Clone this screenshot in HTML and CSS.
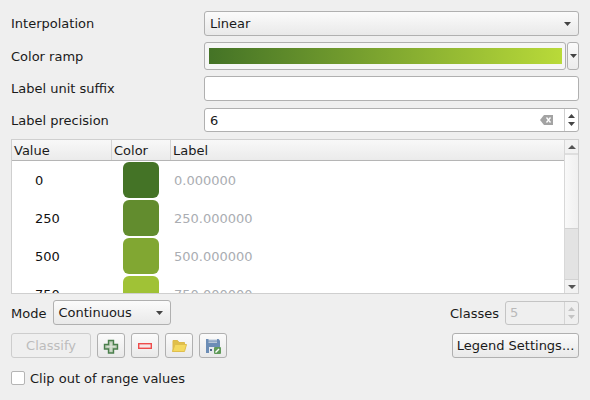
FILE: index.html
```html
<!DOCTYPE html>
<html lang="en">
<head>
<meta charset="utf-8">
<title>Color ramp settings</title>
<link rel="stylesheet" href="styles.css">
</head>
<body>
<div class="panel">
  <div class="form">
    <div class="row r-interp">
      <label class="lbl">Interpolation</label>
      <div class="field combo">Linear<svg class="arrow" width="7" height="4" viewBox="0 0 7 4"><path d="M0 0h7L3.500 4z"/></svg></div>
    </div>
    <div class="row r-ramp">
      <label class="lbl">Color ramp</label>
      <div class="field ramp-wrap">
        <div class="ramp-main"><div class="ramp"></div></div>
        <div class="ramp-btn"><svg class="arrow" width="7" height="4" viewBox="0 0 7 4"><path d="M0 0h7L3.500 4z"/></svg></div>
      </div>
    </div>
    <div class="row r-suffix">
      <label class="lbl">Label unit suffix</label>
      <div class="field input"></div>
    </div>
    <div class="row r-prec">
      <label class="lbl">Label precision</label>
      <div class="field input spin">
        <span class="spin-text">6</span>
        <svg class="clear" width="13" height="10" viewBox="0 0 13 10"><path d="M4 0h9v10H4L0 5z" fill="#a3a3a3"/><path d="M6.500 2.500l4 5M10.500 2.500l-4 5" stroke="#fff" stroke-width="1.300" fill="none"/></svg>
        <div class="spin-btns">
          <svg width="7" height="4" viewBox="0 0 7 4"><path d="M0 4h7L3.500 0z" fill="#444"/></svg>
          <svg width="7" height="4" viewBox="0 0 7 4"><path d="M0 0h7L3.500 4z" fill="#444"/></svg>
        </div>
      </div>
    </div>
  </div>

  <div class="table">
    <div class="table-main">
      <div class="thead">
        <div class="th c-val">Value</div>
        <div class="th c-col">Color</div>
        <div class="th c-lab">Label</div>
      </div>
      <div class="tbody">
        <div class="tr"><div class="td-val">0</div><div class="td-col"><div class="swatch s0"></div></div><div class="td-lab">0.000000</div></div>
        <div class="tr"><div class="td-val">250</div><div class="td-col"><div class="swatch s1"></div></div><div class="td-lab">250.000000</div></div>
        <div class="tr"><div class="td-val">500</div><div class="td-col"><div class="swatch s2"></div></div><div class="td-lab">500.000000</div></div>
        <div class="tr"><div class="td-val">750</div><div class="td-col"><div class="swatch s3"></div></div><div class="td-lab">750.000000</div></div>
      </div>
    </div>
    <div class="scroll">
      <div class="sb-btn sb-up"><svg width="8" height="4" viewBox="0 0 8 4"><path d="M0 4h8L4 0z" fill="#555"/></svg></div>
      <div class="sb-handle"></div>
      <div class="sb-track"></div>
      <div class="sb-btn sb-down"><svg width="8" height="4" viewBox="0 0 8 4"><path d="M0 0h8L4 4z" fill="#555"/></svg></div>
    </div>
  </div>

  <div class="mode-row">
    <label class="lbl-inline">Mode</label>
    <div class="mode-combo">Continuous<svg class="arrow" width="7" height="4" viewBox="0 0 7 4"><path d="M0 0h7L3.500 4z"/></svg></div>
    <div class="spacer"></div>
    <label class="lbl-classes">Classes</label>
    <div class="classes">
      <span class="classes-text">5</span>
      <div class="classes-btns">
        <svg width="7" height="4" viewBox="0 0 7 4"><path d="M0 4h7L3.500 0z" fill="#c4c4c4"/></svg>
        <svg width="7" height="4" viewBox="0 0 7 4"><path d="M0 0h7L3.500 4z" fill="#c4c4c4"/></svg>
      </div>
    </div>
  </div>

  <div class="btn-row">
    <button class="btn classify" disabled>Classify</button>
    <button class="btn icon-btn" aria-label="Add">
      <svg width="16" height="16" viewBox="0 0 16 16"><path d="M5.500 2.500h5v4h4v4.500h-4v4h-5v-4h-4v-4.500h4z" fill="#b9c9b4" stroke="#4a7f4c" stroke-width="1.400"/><path d="M8 4.500v9M3.500 8.750h9" stroke="#dfe7dc" stroke-width="1.200"/></svg>
    </button>
    <button class="btn icon-btn" aria-label="Remove">
      <svg width="16" height="16" viewBox="0 0 16 16"><rect x="1.700" y="5.700" width="12.600" height="4.600" fill="#f6e6e6" stroke="#ee4c4c" stroke-width="1.400"/></svg>
    </button>
    <button class="btn icon-btn" aria-label="Open">
      <svg width="16" height="16" viewBox="0 0 16 16"><path d="M2 14V2.500h4.500L8 4.500h5.500V6.500" fill="#e0bf4a" stroke="#dcb94a"/><path d="M1.500 13.500L4 6.500h11.500l-2 7z" fill="#f4d95f" stroke="#dfbe4d"/></svg>
    </button>
    <button class="btn icon-btn" aria-label="Save">
      <svg width="16" height="16" viewBox="0 0 16 16"><path d="M1 1h12.500L15 2.500V15H1z" fill="#6c8db6"/><rect x="3.500" y="1" width="8.500" height="1.500" fill="#d9e0e8"/><rect x="3.500" y="3.500" width="8.500" height="1.500" fill="#b9c7d8"/><rect x="4" y="9" width="7" height="6" fill="#e7eaee"/><rect x="5" y="11" width="2" height="2" fill="#50688a"/><rect x="9" y="9" width="7" height="7" rx="1" fill="#5f9a58"/><path d="M10.500 14.500l3.500-3.500" stroke="#fff" stroke-width="1.400"/></svg>
    </button>
    <div class="spacer"></div>
    <button class="btn legend">Legend Settings...</button>
  </div>

  <label class="check-row"><span class="check"></span>Clip out of range values</label>
</div>
</body>
</html>
```
FILE: styles.css
```css
* { box-sizing: border-box; }
html, body { margin: 0; height: 100%; }
body {
  background: #efefef;
  font-family: "DejaVu Sans", sans-serif;
  font-size: 13px;
  color: #1a1a1a;
  overflow: hidden;
}
.panel { width: 590px; height: 400px; padding: 11px 11px 0; display: flex; flex-direction: column; }

.form { display: flex; flex-direction: column; }
.row { display: flex; align-items: center; }
.r-interp { height: 25px; }
.r-ramp { height: 28px; margin-top: 6px; }
.r-suffix { height: 25px; margin-top: 6px; }
.r-prec { height: 24px; margin-top: 7px; }
.lbl { width: 193px; flex: none; }
.field { flex: 1; height: 100%; border-radius: 3px; }

.combo {
  display: flex; align-items: center; justify-content: space-between;
  padding: 0 7px 0 5px;
  border: 1px solid #b0b0b0;
  background: linear-gradient(#fbfbfb, #e9e9e9);
}
.arrow { fill: #444; flex: none; }

.ramp-wrap { display: flex; gap: 1px; }
.ramp-main {
  flex: 1; padding: 5px 3px 5px 4px;
  background: #f6f6f6; border: 1px solid #b0b0b0; border-radius: 3px;
}
.ramp { height: 100%; background: linear-gradient(90deg, #447326, #b9da39); }
.ramp-btn {
  width: 12px; flex: none; display: flex; align-items: center; justify-content: center;
  border: 1px solid #b0b0b0; border-radius: 3px; background: linear-gradient(#fbfbfb, #ececec);
}

.input { background: #fff; border: 1px solid #b0b0b0; }
.spin { display: flex; align-items: center; padding-left: 5px; }
.spin-text { flex: 1; }
.clear { flex: none; margin-right: 11px; }
.spin-btns {
  width: 14px; height: 100%; flex: none;
  border-left: 1px solid #cfcfcf;
  display: flex; flex-direction: column; align-items: center; justify-content: center; gap: 4px;
}
.spin-btns svg, .classes-btns svg { display: block; }

.table {
  margin-top: 7px; height: 155px; flex: none;
  display: flex;
  background: #fff; border: 1px solid #cfcfcf;
}
.table-main { flex: 1; min-width: 0; display: flex; flex-direction: column; overflow: hidden; }
.thead {
  height: 21px; flex: none; display: flex;
  background: linear-gradient(#f8f8f8, #ebebeb);
  border-bottom: 1px solid #b5b5b5;
}
.th { height: 100%; padding: 0 2px; display: flex; align-items: center; border-right: 1px solid #d4d4d4; }
.c-val { width: 100px; }
.c-col { width: 59px; }
.c-lab { flex: 1; border-right: 0; padding-left: 2px; }
.tbody { flex: 1; overflow: hidden; }
.tr { height: 38px; display: flex; align-items: center; color: #111; }
.td-val { width: 100px; padding-left: 23px; }
.td-col { width: 59px; padding-left: 11px; }
.swatch { width: 36px; height: 36px; border-radius: 6px; }
.s0 { background: #447326; }
.s1 { background: #628c2e; }
.s2 { background: #81a732; }
.s3 { background: #a0c236; }
.td-lab { padding-left: 3px; color: #aaadb2; }

.scroll { width: 14px; flex: none; display: flex; flex-direction: column; border-left: 1px solid #d8d8d8; }
.sb-btn { height: 13px; flex: none; display: flex; align-items: center; justify-content: center; background: #f2f2f2; }
.sb-handle { height: 76px; flex: none; background: linear-gradient(90deg, #f9f9f9, #f0f0f0); border-top: 2px solid #dedede; border-bottom: 1px solid #d2d2d2; }
.sb-track { flex: 1; background: #e3e3e3; border-bottom: 1px solid #d2d2d2; }

.mode-row { display: flex; align-items: center; height: 25px; margin-top: 6px; }
.lbl-inline { margin-right: 7px; padding-top: 2px; }
.mode-combo {
  width: 118px; height: 25px; display: flex; align-items: center; justify-content: space-between;
  padding: 0 7px 0 4px;
  border: 1px solid #b0b0b0; border-radius: 3px;
  background: linear-gradient(#fbfbfb, #e9e9e9);
}
.spacer { flex: 1; }
.lbl-classes { margin-right: 6px; padding-top: 2px; }
.classes {
  width: 74px; height: 24px; display: flex; align-items: center;
  padding-left: 4px; color: #b9b9b9;
  border: 1px solid #c4c4c4; border-radius: 3px; background: #efefef;
}
.classes-text { flex: 1; }
.classes-btns {
  width: 14px; height: 100%; border-left: 1px solid #d4d4d4;
  display: flex; flex-direction: column; align-items: center; justify-content: center; gap: 4px;
}

.btn-row { display: flex; align-items: center; height: 25px; margin-top: 8px; gap: 6px; }
.btn {
  font: inherit; color: inherit; height: 25px; margin: 0; padding: 0;
  border: 1px solid #b0b0b0; border-radius: 3px;
  background: linear-gradient(#fbfbfb, #e9e9e9);
  display: flex; align-items: center; justify-content: center;
}
.classify { width: 80px; color: #bcbcbc; border-color: #cdcdcd; background: #efefef; }
.icon-btn { width: 28px; padding-top: 1px; }
.legend { width: 127px; }

.check-row { display: flex; align-items: center; gap: 5px; margin-top: 13px; height: 14px; }
.check { width: 14px; height: 14px; background: #fff; border: 1px solid #b5b5b5; border-radius: 2px; flex: none; }
```
